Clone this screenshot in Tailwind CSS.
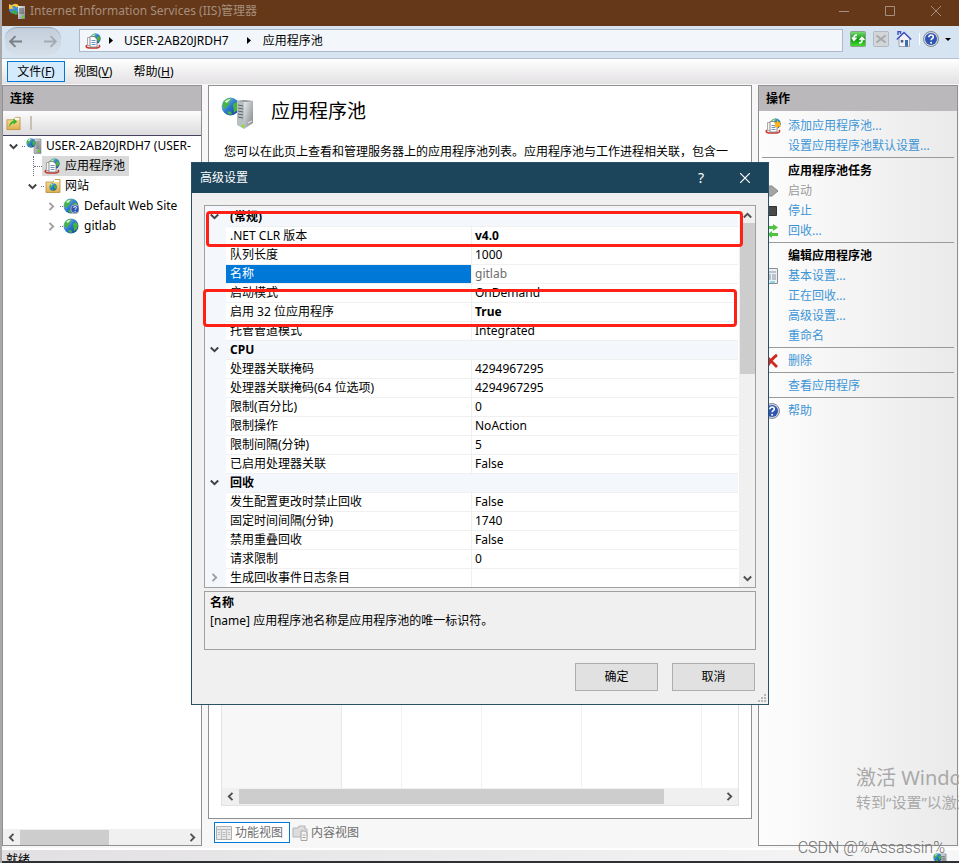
<!DOCTYPE html>
<html lang="zh-CN">
<head>
    <meta charset="UTF-8">
    <meta name="viewport" content="width=device-width, initial-scale=1.0">
    <title>Internet Information Services (IIS)管理器</title>
    <script src="https://cdn.jsdelivr.net/npm/@tailwindcss/browser@4"></script>
</head>
<body class="relative flex h-screen flex-col overflow-hidden border-l-2 border-[#a9a9a9] bg-[#f7f7f7] font-['Noto_Sans','Noto_Sans_CJK_SC',sans-serif] text-xs leading-5 text-black">

    <!-- Icon set -->
    <svg class="absolute size-0">
        <defs>
            <linearGradient id="gBlue" x1="0" y1="0" x2="1" y2="1"><stop offset="0" stop-color="#9fd4f8"/><stop offset=".5" stop-color="#2c78cc"/><stop offset="1" stop-color="#123a8c"/></linearGradient>
            <linearGradient id="gSteel" x1="0" y1="0" x2="1" y2="1"><stop offset="0" stop-color="#eceeee"/><stop offset="1" stop-color="#7b8286"/></linearGradient>
            <linearGradient id="gFolder" x1="0" y1="0" x2="0" y2="1"><stop offset="0" stop-color="#f8e6a4"/><stop offset="1" stop-color="#dfae4e"/></linearGradient>
            <linearGradient id="gGreen" x1="0" y1="0" x2="0" y2="1"><stop offset="0" stop-color="#7fe07a"/><stop offset=".5" stop-color="#0c9a10"/><stop offset="1" stop-color="#48e030"/></linearGradient>
        </defs>
        <symbol id="globe" viewBox="0 0 16 16">
            <circle cx="8" cy="8" r="7.5" fill="url(#gBlue)"/>
            <path d="M2 4Q5 .5 8 1.200L8.500 3 6.500 4 7 6 5 7.500 3.500 10 1.200 8ZM10 6l3-2 2 3-1 4-3 2-.5-3.500ZM5 12.500l3-.5 1.500 2.500-3 .3Z" fill="#45b53d"/>
            <path d="M3 4Q5 1.500 8 1.800L5 5Z" fill="#d5f5c9"/>
        </symbol>
        <symbol id="server" viewBox="0 0 16 16">
            <path d="M8 1h7v14.500H8Z" fill="url(#gSteel)" stroke="#7d8489" stroke-width=".6"/>
            <path d="M9.500 4h4M9.500 6h4M9.500 8h4M9.500 10h4" stroke="#5c666c" stroke-width=".8"/>
            <circle cx="13" cy="13" r="1.200" fill="#5fd32c"/>
            <use href="#globe" x="0" y="0" width="10" height="10"/>
        </symbol>
        <symbol id="pool" viewBox="0 0 16 16">
            <use href="#globe" x="5" y="0" width="11" height="11"/>
            <path d="M2 12Q-.5 14 4 15h8q4-1 2-3" fill="none" stroke="#c8372d" stroke-width="1.400"/>
            <path d="M2.500 4.500h6v8h-6Z" fill="#f4f4f4" stroke="#8a8a8a" stroke-width=".7"/>
            <path d="M5 3.500h4l3 2.500v8H5Z" fill="#fff" stroke="#777" stroke-width=".8"/>
            <path d="M6.500 7.500h4M6.500 9.500h4M6.500 11.500h4" stroke="#4d79b8" stroke-width=".8"/>
        </symbol>
        <symbol id="pooladd" viewBox="0 0 16 16">
            <use href="#pool" width="16" height="16"/>
            <path d="M12.500 2l1 2.500L16 4l-1.200 2.500L16 9l-2.500-.5-1 2.500-1-2.500L9 9l1.200-2.500L9 4l2.500.5Z" fill="#ffb21e"/>
        </symbol>
        <symbol id="folder" viewBox="0 0 16 16">
            <path d="M1 4h7l2-2.500h5V14.500H1Z" fill="url(#gFolder)" stroke="#b98a36" stroke-width=".8"/>
            <path d="M9 2h5v2H9Z" fill="#fff"/>
        </symbol>
        <symbol id="help" viewBox="0 0 16 16">
            <circle cx="8" cy="8" r="7.500" fill="#d4d7dc" stroke="#6d737d" stroke-width=".8"/>
            <circle cx="8" cy="8" r="6" fill="#2c55b4"/>
            <path d="M5.800 6.300Q6 4 8.100 4T10.300 6Q10.300 7.200 9 7.800 8.100 8.300 8.100 9.300" fill="none" stroke="#fff" stroke-width="1.600"/>
            <circle cx="8.100" cy="11.700" r="1" fill="#fff"/>
        </symbol>
        <symbol id="down" viewBox="0 0 9 9"><path d="M.8 2.500 4.500 6.200 8.200 2.500" fill="none" stroke="currentColor" stroke-width="1.900"/></symbol>
        <symbol id="up" viewBox="0 0 9 9"><path d="M.8 6.500 4.500 2.800 8.200 6.500" fill="none" stroke="currentColor" stroke-width="1.900"/></symbol>
        <symbol id="right" viewBox="0 0 9 9"><path d="M2.500 .8 6.200 4.500 2.500 8.200" fill="none" stroke="currentColor" stroke-width="1.900"/></symbol>
        <symbol id="left" viewBox="0 0 9 9"><path d="M6.500 .8 2.800 4.500 6.500 8.200" fill="none" stroke="currentColor" stroke-width="1.900"/></symbol>
        <symbol id="page" viewBox="0 0 16 16">
            <path d="M.5 1.500h15v13H.5Z" fill="#e8e8e8" stroke="#b0b0b0"/>
            <path d="M1 4.500h14M5.500 4v10M10.500 4v10M6.500 7.500h3M6.500 9.500h3M6.500 11.500h3M2 7.500h2M2 9.500h2M12 7.500h2M12 9.500h2" stroke="#bdbdbd"/>
        </symbol>
    </svg>

    <!-- Title bar -->
    <header class="flex h-[26px] shrink-0 items-center bg-[#643818] pr-[18px] pb-[5px] pl-[6px] text-[#a78f7e]">
        <svg class="size-[18px]" viewBox="0 0 18 18">
            <circle cx="6" cy="7" r="5" fill="#3f8fd6"/>
            <path d="M1 7V2l3 1.500Q8 0 11 4L8.500 5.500Q6 3 4 5L6 6.500Z" fill="#ffc72e"/>
            <path d="M10 4h7v13h-7Z" fill="url(#gSteel)"/>
            <path d="M11 7h5M11 9h5M11 11h5" stroke="#4e575c"/>
            <path d="M3 10l4-2 3 4-2 1Z" fill="#3fae3b"/>
            <circle cx="15" cy="15" r="1.200" fill="#5fd32c"/>
        </svg>
        <h1 class="ml-1 flex-1">Internet Information Services (IIS)管理器</h1>
        <div class="flex items-center gap-9">
            <button aria-label="最小化"><svg class="size-[10px]" viewBox="0 0 10 10"><path d="M0 5.500h10" stroke="currentColor"/></svg></button>
            <button aria-label="最大化"><svg class="size-[10px]" viewBox="0 0 10 10"><path d="M.5.500h9v9h-9Z" fill="none" stroke="currentColor"/></svg></button>
            <button aria-label="关闭"><svg class="size-[10px]" viewBox="0 0 10 10"><path d="M0 0l10 10M10 0L0 10" stroke="currentColor"/></svg></button>
        </div>
    </header>

    <!-- Address bar -->
    <nav class="flex h-[33px] shrink-0 items-center border-b border-[#b3c0cf] bg-[#d6e4f1] pb-[3px] pl-[3px]">
        <div class="flex h-7 w-14 items-center justify-between rounded-xl border-t border-[#94a2b3] bg-linear-to-b from-[#c3cedb] to-[#d6e0ea] px-1">
            <button aria-label="后退"><svg class="size-[13px]" viewBox="0 0 12 12"><path d="M12 6H1M6 1L1 6l5 5" fill="none" stroke="#7b8084" stroke-width="1.800"/></svg></button>
            <button aria-label="前进"><svg class="size-[13px]" viewBox="0 0 12 12"><path d="M0 6h11M6 1l5 5-5 5" fill="none" stroke="#a4abb2" stroke-width="1.800"/></svg></button>
        </div>
        <div class="ml-[18px] flex h-[23px] flex-1 items-center border border-[#adb9c8] bg-[#f3f7fb] pl-[5px]">
            <svg class="size-4"><use href="#pool"/></svg>
            <svg class="mx-2 h-[7px] w-1" viewBox="0 0 4 7"><path d="M0 0l4 3.500L0 7Z"/></svg>
            <a href="#" class="ml-[3px]">USER-2AB20JRDH7</a>
            <svg class="mr-3 ml-[18px] h-[7px] w-1" viewBox="0 0 4 7"><path d="M0 0l4 3.500L0 7Z"/></svg>
            <a href="#">应用程序池</a>
        </div>
        <div class="flex items-center gap-[7px] pr-2 pb-[3px] pl-[7px]">
            <button aria-label="刷新"><svg class="size-4" viewBox="0 0 16 16"><rect x=".5" y=".5" width="15" height="15" rx="1" fill="url(#gGreen)" stroke="#8ca08a"/><path d="M7 4Q3.500 4 4 8M2 6.500 4 9.200 6.500 6.500M9 12q3.500 0 3-4M9.500 9 12 6.500 14.500 9" fill="none" stroke="#fff" stroke-width="1.600"/></svg></button>
            <button aria-label="停止" disabled><svg class="size-4" viewBox="0 0 16 16"><rect x=".5" y=".5" width="15" height="15" rx="1" fill="#d3d6d9" stroke="#b5b9bd"/><path d="M3.500 4.500l9 7M12.500 4.500l-9 7" stroke="#a5a9ad" stroke-width="2"/></svg></button>
            <button aria-label="主页"><svg class="size-4" viewBox="0 0 16 16"><path d="M3 7l5-5 5.500 5v8.500H3Z" fill="#f2f2f4" stroke="#8b8fa0" stroke-width=".8"/><path d="M2 4V.5h2.500V3M.8 8.500 8 1.500l7.200 7" fill="none" stroke="#3c50c4" stroke-width="1.400"/><path d="M9 9h3v6.500H9Z" fill="#3d6eb0"/><path d="M4.800 9h2.500v2.500H4.800Z" fill="#525a80"/></svg></button>
            <span class="h-3 w-px bg-white"></span>
            <button aria-label="帮助" class="-ml-1 flex items-center gap-[6px]"><svg class="size-4"><use href="#help"/></svg><svg class="h-[3px] w-[6px]" viewBox="0 0 6 3"><path d="M0 0h6L3 3Z"/></svg></button>
        </div>
    </nav>

    <!-- Menu bar -->
    <div class="flex h-[25px] shrink-0 items-center bg-linear-to-b from-white to-[#e3e1e3] pl-[5px]">
        <button class="h-[21px] w-[58px] border border-[#0078d7] bg-[#d4ebfd] leading-4">文件(<u>F</u>)</button>
        <button class="ml-[9px] leading-4">视图(<u>V</u>)</button>
        <button class="ml-[21px] leading-4">帮助(<u>H</u>)</button>
    </div>

    <main class="mt-px flex min-h-0 flex-1 gap-[6px] pr-px">

        <!-- Connections -->
        <section class="mb-[1px] flex w-[200px] shrink-0 flex-col border border-[#8f908f] bg-white">
            <h2 class="h-[25px] shrink-0 bg-[#bab8ba] pt-[3px] pl-[7px] font-bold">连接</h2>
            <div class="flex h-[25px] shrink-0 items-center gap-[9px] border-b border-[#45455f] bg-linear-to-b from-[#fcfcfc] to-[#dedcde] pl-[3px]">
                <button aria-label="连接"><svg class="size-[15px]" viewBox="0 0 16 16"><use href="#folder"/><path d="M3 12Q4 6 8 5V2.500L12 6 8 9V7.200Q6 8 3 12Z" fill="#39b52d"/></svg></button>
                <span class="h-[14px] w-[2px] bg-[#c4c3b3]"></span>
            </div>
            <ul class="flex-1 overflow-hidden whitespace-nowrap">
                <li class="flex h-5 items-center pl-[6px]">
                    <svg class="size-[9px] shrink-0 text-[#404040]"><use href="#down"/></svg>
                    <span class="ml-1 w-[3px] border-t border-dotted border-gray-500"></span>
                    <svg class="ml-px size-4 shrink-0"><use href="#server"/></svg>
                    <span class="ml-1">USER-2AB20JRDH7 (USER-</span>
                </li>
                <li class="flex h-5 items-center pl-[30px]">
                    <span class="h-5 border-l border-dotted border-gray-500"></span>
                    <span class="w-2 border-t border-dotted border-gray-500"></span>
                    <span class="flex h-5 items-center gap-[5px] bg-[#d9d9d9] pr-1 pl-[2px]"><svg class="size-4"><use href="#pool"/></svg>应用程序池</span>
                </li>
                <li class="flex h-5 items-center pl-[25px]">
                    <svg class="size-[9px] text-[#404040]"><use href="#down"/></svg>
                    <span class="ml-1 w-[3px] border-t border-dotted border-gray-500"></span>
                    <svg class="ml-px size-4" viewBox="0 0 16 16"><use href="#folder"/><use href="#globe" x="4" y="5" width="8" height="8"/></svg>
                    <span class="ml-1">网站</span>
                </li>
                <li class="flex h-5 items-center pl-11">
                    <svg class="size-[9px] text-[#a0a0a0]"><use href="#right"/></svg>
                    <span class="ml-1 w-[3px] border-t border-dotted border-gray-500"></span>
                    <svg class="size-4" viewBox="0 0 16 16"><use href="#globe"/><use href="#help" x="7" y="6" width="10" height="10"/></svg>
                    <span class="ml-[5px]">Default Web Site</span>
                </li>
                <li class="flex h-5 items-center pl-11">
                    <svg class="size-[9px] text-[#a0a0a0]"><use href="#right"/></svg>
                    <span class="ml-1 w-[3px] border-t border-dotted border-gray-500"></span>
                    <svg class="size-4"><use href="#globe"/></svg>
                    <span class="ml-[5px]">gitlab</span>
                </li>
            </ul>
            <div class="flex h-4 items-center bg-[#f0f0f0] px-1 text-[#505050]">
                <svg class="size-[9px]"><use href="#left"/></svg>
                <div class="ml-1 flex h-[15px] flex-1"><span class="h-[15px] w-[89px] bg-[#cdcdcd]"></span></div>
                <svg class="size-[9px]"><use href="#right"/></svg>
            </div>
        </section>

        <!-- Application pools -->
        <section class="flex min-w-0 flex-1 flex-col">
            <div class="flex min-h-0 flex-1 flex-col border border-[#8f908f] bg-white px-3 pb-3">
                <div class="flex items-center pt-[9px]">
                    <svg class="h-9 w-[34px]" viewBox="0 0 34 36">
                        <use href="#globe" x="0" y="2" width="19" height="19"/>
                        <path d="M16 6l7-1v29l-7-4Z" fill="#b9c0c4"/>
                        <path d="M23 5l9 1v22l-9 6Z" fill="url(#gSteel)"/>
                        <path d="M16 6l7-1 9 1-7 1Z" fill="#8f979b"/>
                        <path d="M17 10l5 1M17 13l5 1M17 16l5 1M17 19l5 1M17 22l5 1" stroke="#59636a"/>
                        <circle cx="22" cy="31" r="1.500" fill="#8cdd28"/>
                        <path d="M27 28l4-2" stroke="#f4f4f4"/>
                    </svg>
                    <h2 class="ml-4 pb-1 text-[19px] leading-7">应用程序池</h2>
                </div>
                <p class="mt-[11px] overflow-hidden pl-[3px] whitespace-nowrap">您可以在此页上查看和管理服务器上的应用程序池列表。应用程序池与工作进程相关联，包含一</p>
                <div class="mt-10 flex flex-1 flex-col border border-[#e3e3e3]">
                    <div class="flex flex-1">
                        <span class="w-[120px] border-r border-[#e2ebf5] bg-[#f7f7f7]"></span>
                        <span class="w-[60px] border-r border-[#edf2f9]"></span>
                        <span class="w-20 border-r border-[#edf2f9]"></span>
                        <span class="w-[100px] border-r border-[#edf2f9]"></span>
                        <span class="w-[120px] border-r border-[#edf2f9]"></span>
                    </div>
                    <div class="flex h-[17px] items-center bg-[#f0f0f0] px-1 pb-px text-[#505050]">
                        <svg class="size-[9px]"><use href="#left"/></svg>
                        <div class="ml-1 flex h-[15px] flex-1"><span class="h-[15px] w-[425px] bg-[#cdcdcd]"></span></div>
                        <svg class="size-[9px]"><use href="#right"/></svg>
                    </div>
                </div>
            </div>
            <div class="flex h-7 items-start gap-[2px] pt-[3px] pl-[6px] text-[#6d6d6d]">
                <button class="flex h-[21px] w-[76px] items-center gap-[3px] border border-[#0078d7] bg-white pl-px leading-4"><svg class="size-4"><use href="#page"/></svg>功能视图</button>
                <button class="flex h-[21px] items-center gap-[3px] leading-4"><svg class="size-4" viewBox="0 0 16 16"><path d="M1 3h5l1-2h6v3h2v8H1Z" fill="#dcdcdc" stroke="#b5b5b5"/><path d="M9 6h4l2 2v7.500H9Z" fill="#f3f3f3" stroke="#a5a5a5"/><path d="M10.500 10h3M10.500 12.500h3" stroke="#a5a5a5"/></svg>内容视图</button>
            </div>
        </section>

        <!-- Actions -->
        <section class="mb-[1px] w-[200px] shrink-0 border border-[#8f908f] bg-linear-to-r from-[#fdfdfd] to-[#eaeaea]">
            <h2 class="h-[25px] bg-[#bab8ba] pt-[3px] pl-[7px] font-bold">操作</h2>
            <ul id="actions" class="pt-1 pr-[3px] pl-[3px]"></ul>
        </section>
    </main>

    <!-- Status bar -->
    <footer class="mt-px flex h-[15px] shrink-0 items-start overflow-hidden border-t-2 border-b-2 border-t-white border-b-[#2f3033] bg-linear-to-r from-[#e2e0e2] to-[#f7f7f7] pr-[12px] pl-1">
        <span class="flex-1">就绪</span>
        <svg class="mt-[3px] size-[14px]"><use href="#server"/></svg>
    </footer>

    <!-- Desktop watermarks -->
    <div class="pointer-events-none absolute top-[764px] left-[854px] whitespace-nowrap text-[#a9a9a9]">
        <p class="text-xl leading-7">激活 Windows</p>
        <p class="text-[15px] leading-5">转到“设置”以激活 Windows。</p>
    </div>
    <p class="pointer-events-none absolute right-[14px] bottom-[5px] font-['Roboto',sans-serif] text-base leading-5 font-light text-[#6f6f6f]">CSDN @%Assassin%</p>

    <!-- Advanced settings dialog -->
    <div role="dialog" aria-labelledby="dialogTitle" class="absolute top-[162px] left-[189px] w-[578px] border border-[#285069] bg-[#f0f0f0]">
        <div class="flex h-[30px] items-center bg-[#1c445b] pr-[18px] pl-2 text-white">
            <h2 id="dialogTitle" class="flex-1">高级设置</h2>
            <button aria-label="帮助" class="mr-9 text-sm leading-5">?</button>
            <button aria-label="关闭"><svg class="size-[10px]" viewBox="0 0 10 10"><path d="M0 0l10 10M10 0L0 10" stroke="currentColor" stroke-width="1.200"/></svg></button>
        </div>
        <div class="px-3 pt-3 pb-[13px]">
            <div class="flex border border-[#a0a0a0] bg-[#f4f7fc] pt-px">
                <table class="flex-1 table-fixed border-separate border-spacing-0 bg-white leading-[18px]">
                    <colgroup><col class="w-[21px]"><col class="w-[246px]"><col></colgroup>
                    <tbody id="props"></tbody>
                </table>
                <div class="flex w-[17px] flex-col items-center border-l border-white bg-[#f0f0f0] py-1 text-[#505050]">
                    <svg class="size-[9px]"><use href="#up"/></svg>
                    <span class="mt-[3px] h-[151px] w-[15px] bg-[#cdcdcd]"></span>
                    <svg class="mt-auto size-[9px]"><use href="#down"/></svg>
                </div>
            </div>
            <div class="mt-[3px] h-[59px] border border-[#a0a0a0] px-[5px] pt-[2px] leading-[18px]">
                <h3 class="font-bold">名称</h3>
                <p>[name] 应用程序池名称是应用程序池的唯一标识符。</p>
            </div>
            <div class="mt-[13px] flex justify-end gap-[14px] pr-px">
                <button class="h-7 w-[83px] border border-[#adadad] bg-[#e1e1e1]">确定</button>
                <button class="h-7 w-[83px] border border-[#adadad] bg-[#e1e1e1]">取消</button>
            </div>
        </div>
        <svg class="absolute right-[2px] bottom-[2px] size-2 text-[#b8b8b8]" viewBox="0 0 8 8"><path d="M6 0h2v2H6ZM3 3h2v2H3ZM6 3h2v2H6ZM0 6h2v2H0ZM3 6h2v2H3ZM6 6h2v2H6Z" fill="currentColor"/></svg>
        <!-- Highlight frames -->
        <div class="pointer-events-none absolute top-[48px] left-[14px] h-[36px] w-[537px] rounded border-3 border-[#ff2016]"></div>
        <div class="pointer-events-none absolute top-[126px] left-[11px] h-[38px] w-[534px] rounded border-3 border-[#ff2016]"></div>
    </div>

    <script>
        const props = [
            { group: "(常规)" },
            { name: ".NET CLR 版本", value: "v4.0", bold: true },
            { name: "队列长度", value: "1000" },
            { name: "名称", value: "gitlab", selected: true },
            { name: "启动模式", value: "OnDemand" },
            { name: "启用 32 位应用程序", value: "True", bold: true },
            { name: "托管管道模式", value: "Integrated" },
            { group: "CPU" },
            { name: "处理器关联掩码", value: "4294967295" },
            { name: "处理器关联掩码(64 位选项)", value: "4294967295" },
            { name: "限制(百分比)", value: "0" },
            { name: "限制操作", value: "NoAction" },
            { name: "限制间隔(分钟)", value: "5" },
            { name: "已启用处理器关联", value: "False" },
            { group: "回收" },
            { name: "发生配置更改时禁止回收", value: "False" },
            { name: "固定时间间隔(分钟)", value: "1740" },
            { name: "禁用重叠回收", value: "False" },
            { name: "请求限制", value: "0" },
            { name: "生成回收事件日志条目", value: "", expand: true },
        ];

        const actions = [
            { text: "添加应用程序池...", icon: `<use href="#pooladd"/>` },
            { text: "设置应用程序池默认设置..." },
            { line: true },
            { title: "应用程序池任务" },
            { text: "启动", off: true, icon: `<path d="M3 3h4l6 5-6 5H3Z" fill="#a5a5a5" stroke="#8a8a8a"/>` },
            { text: "停止", icon: `<path d="M1.500 3.500h10v9h-10Z" fill="#4a4a4a" stroke="#333"/>` },
            { text: "回收...", icon: `<path d="M2 6V3h6V1l5 3.500L8 8V6ZM13 10v3H7v2l-5-3.500L7 8v2Z" fill="#4fc23f"/>` },
            { line: true },
            { title: "编辑应用程序池" },
            { text: "基本设置...", icon: `<path d="M.5.500h12v15H.5Z" fill="#eef1f4" stroke="#8b8f96"/><path d="M3 4h8M3 7h3M7 7h4M3 9h3M7 9h4M3 11h3M7 11h4" stroke="#8793a3"/><path d="M5 14h5" stroke="#35bcd8"/>` },
            { text: "正在回收..." },
            { text: "高级设置..." },
            { text: "重命名" },
            { line: true },
            { text: "删除", icon: `<path d="M1 3l11 11M12 2Q6 6 2 14" stroke="#cf2a20" stroke-width="2.800" fill="none"/>` },
            { line: true },
            { text: "查看应用程序" },
            { line: true },
            { text: "帮助", icon: `<use href="#help" x="-1"/>` },
        ];

        function arrow(dir, color) {
            return `<svg class="ml-[5px] size-[9px] ${color}"><use href="#${dir}"/></svg>`;
        }

        document.getElementById("props").innerHTML = props.map(p => {
            if (p.group) {
                return `<tr class="h-[19px] bg-[#f4f7fc]">
                    <td class="p-0">${arrow("down", "text-[#404040]")}</td>
                    <th colspan="2" class="border-t border-[#f0f0f0] p-0 pl-1 text-left font-bold">${p.group}</th>
                </tr>`;
            }
            return `<tr class="h-[19px]">
                <td class="bg-[#f4f7fc] p-0">${p.expand ? arrow("right", "text-[#a0a0a0]") : ""}</td>
                <td class="border-t border-r border-[#f0f0f0] p-0 pl-1 ${p.selected ? "bg-[#0078d7] bg-clip-padding text-white" : ""}">${p.name}</td>
                <td class="border-t border-[#f0f0f0] p-0 pl-[3px] ${p.bold ? "font-bold" : ""} ${p.selected ? "text-[#6d6d6d]" : ""}">${p.value}</td>
            </tr>`;
        }).join("");

        document.getElementById("actions").innerHTML = actions.map(a => {
            if (a.line) return `<li class="flex h-[5px] items-center"><hr class="w-full border-[#9a9a9a]"></li>`;
            if (a.title) return `<li class="h-5 pt-px pl-[26px] font-bold">${a.title}</li>`;
            return `<li class="flex h-5 items-center gap-[7px] pt-[2px] pl-[3px]">
                <svg class="size-4" viewBox="0 0 16 16">${a.icon || ""}</svg>
                <a href="#" class="${a.off ? "text-[#9b9b9b]" : "text-[#3d95d6]"}">${a.text}</a>
            </li>`;
        }).join("");
    </script>
</body>
</html>
